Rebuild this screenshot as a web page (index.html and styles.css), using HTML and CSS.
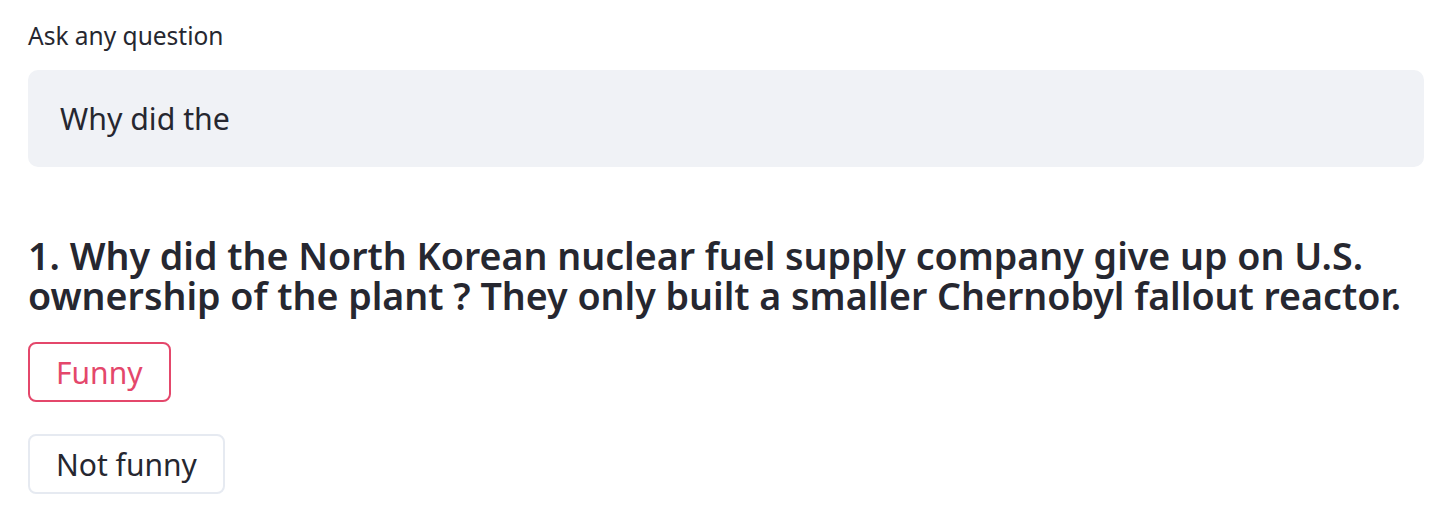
FILE: index.html
```html
<!DOCTYPE html>
<html>
<head>
<meta charset="utf-8">
<link rel="stylesheet" href="styles.css">
</head>
<body>
<main class="app">
  <label class="field-label" for="q">Ask any question</label>
  <div class="text-input"><span class="text-value">Why did the</span></div>
  <h3 class="result">1. Why did the North Korean nuclear fuel supply company give up on U.S. ownership of the plant ? They only built a smaller Chernobyl fallout reactor.</h3>
  <div class="actions">
    <button class="btn btn-primary">Funny</button>
    <button class="btn">Not funny</button>
  </div>
</main>
</body>
</html>
```
FILE: styles.css
```css
html, body {
  margin: 0;
  padding: 0;
  background: #ffffff;
}
body {
  font-family: "Noto Sans", "Open Sans", sans-serif;
  color: #262730;
}
.app {
  display: flex;
  flex-direction: column;
  align-items: stretch;
  padding: 20px 24px 0 28px;
}
.field-label {
  display: block;
  font-size: 24.5px;
  line-height: 32px;
  height: 32px;
  color: #262730;
}
.text-input {
  margin-top: 18px;
  height: 97px;
  background: #f0f2f6;
  border-radius: 10px;
  display: flex;
  align-items: center;
  padding-left: 32px;
}
.text-value {
  font-size: 30.3px;
  color: #262730;
}
.result {
  margin: 69px 0 0 0;
  font-size: 37.6px;
  line-height: 40px;
  font-weight: 600;
  color: #262730;
}
.actions {
  margin-top: 26px;
  display: flex;
  flex-direction: column;
  align-items: flex-start;
  gap: 32px;
}
.btn {
  height: 60px;
  box-sizing: border-box;
  padding: 0 26px;
  border: 2px solid #e6eaf1;
  border-radius: 8px;
  background: #ffffff;
  font-family: "Noto Sans", "Open Sans", sans-serif;
  font-size: 30px;
  color: #262730;
  display: inline-flex;
  align-items: center;
}
.btn-primary {
  border-color: #e4476b;
  color: #e4476b;
}
```
